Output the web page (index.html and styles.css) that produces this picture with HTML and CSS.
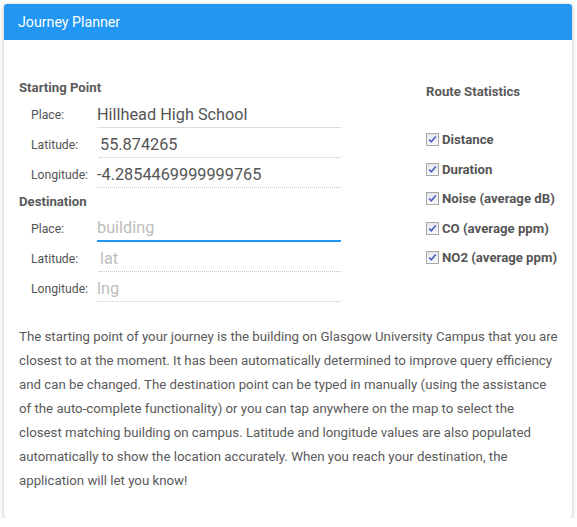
FILE: index.html
```html
<!DOCTYPE html>
<html>
<head>
<meta charset="utf-8">
<link rel="stylesheet" href="styles.css">
</head>
<body>
<div class="card">
  <div class="card-header">Journey Planner</div>
  <div class="card-body">
    <div class="top">
      <div class="form">
        <div class="group-title first">Starting Point</div>
        <div class="row">
          <span class="label">Place:</span>
          <span class="field solid">Hillhead High School</span>
        </div>
        <div class="row">
          <span class="label">Latitude:</span>
          <span class="field dotted shift">55.874265</span>
        </div>
        <div class="row">
          <span class="label">Longitude:</span>
          <span class="field dotted">-4.2854469999999765</span>
        </div>
        <div class="group-title">Destination</div>
        <div class="row">
          <span class="label">Place:</span>
          <span class="field focus placeholder">building</span>
        </div>
        <div class="row">
          <span class="label">Latitude:</span>
          <span class="field dotted shift placeholder">lat</span>
        </div>
        <div class="row">
          <span class="label">Longitude:</span>
          <span class="field dotted placeholder">lng</span>
        </div>
      </div>
      <div class="stats">
        <div class="stats-title">Route Statistics</div>
        <ul class="checks">
          <li><span class="cb"><svg viewBox="0 0 13 13" width="13" height="13"><path d="M3.2 6.6 L5.3 8.8 L9.8 3.4" fill="none" stroke="#4a5fbf" stroke-width="1.6"/></svg></span>Distance</li>
          <li><span class="cb"><svg viewBox="0 0 13 13" width="13" height="13"><path d="M3.2 6.6 L5.3 8.8 L9.8 3.4" fill="none" stroke="#4a5fbf" stroke-width="1.6"/></svg></span>Duration</li>
          <li><span class="cb"><svg viewBox="0 0 13 13" width="13" height="13"><path d="M3.2 6.6 L5.3 8.8 L9.8 3.4" fill="none" stroke="#4a5fbf" stroke-width="1.6"/></svg></span>Noise (average dB)</li>
          <li><span class="cb"><svg viewBox="0 0 13 13" width="13" height="13"><path d="M3.2 6.6 L5.3 8.8 L9.8 3.4" fill="none" stroke="#4a5fbf" stroke-width="1.6"/></svg></span>CO (average ppm)</li>
          <li><span class="cb"><svg viewBox="0 0 13 13" width="13" height="13"><path d="M3.2 6.6 L5.3 8.8 L9.8 3.4" fill="none" stroke="#4a5fbf" stroke-width="1.6"/></svg></span>NO2 (average ppm)</li>
        </ul>
      </div>
    </div>
    <p class="desc">The starting point of your journey is the building on Glasgow University Campus that you are<br>closest to at the moment. It has been automatically determined to improve query efficiency<br>and can be changed. The destination point can be typed in manually (using the assistance<br>of the auto-complete functionality) or you can tap anywhere on the map to select the<br>closest matching building on campus. Latitude and longitude values are also populated<br>automatically to show the location accurately. When you reach your destination, the<br>application will let you know!</p>
  </div>
</div>
</body>
</html>
```
FILE: styles.css
```css
* { box-sizing: border-box; }
html, body { margin: 0; padding: 0; background: #fff; }
body {
  font-family: Roboto, "Liberation Sans", sans-serif;
  color: #555;
  padding: 4px 5px 0 4px;
}
.card {
  width: 568px;
  height: 514px;
  background: #fff;
  border-radius: 3px;
  box-shadow: 0 1px 4px rgba(0,0,0,0.28);
  overflow: hidden;
}
.card-header {
  height: 36px;
  background: #2196f3;
  color: #fff;
  font-size: 14.2px;
  line-height: 36px;
  padding-left: 14px;
}
.card-body {
  padding: 34px 15px 0 15px;
}
.top {
  display: flex;
}
.form {
  width: 322px;
}
.group-title {
  font-size: 13.2px;
  font-weight: 700;
  line-height: 22px;
  padding-top: 3px;
  height: 24px;
  color: #5a5a5a;
}
.row {
  display: flex;
  align-items: stretch;
  height: 30px;
}
.label {
  width: 78px;
  padding-left: 12px;
  font-size: 12.2px;
  line-height: 30px;
  color: #555;
  padding-top: 2px;
}
.field {
  flex: 1;
  font-size: 16.3px;
  line-height: 29px;
  padding-top: 2px;
  color: #555;
  border-bottom: 1px solid transparent;
}
.field.solid { border-bottom: 1px solid #ddd; }
.field.dotted { border-bottom: 1px dotted #c8c8c8; }
.field.focus { border-bottom: 2px solid #2196f3; line-height: 28px; padding-top: 2px; }
.field.shift { margin-left: 2px; padding-left: 1px; }
.field.placeholder { color: #bdbdbd; }
.stats {
  margin-left: 85px;
  padding-top: 9px;
}
.stats-title {
  font-size: 13.2px;
  font-weight: 700;
  line-height: 18px;
  color: #5a5a5a;
}
.checks {
  list-style: none;
  margin: 24px 0 0 0;
  padding: 0;
}
.checks li {
  display: flex;
  align-items: center;
  height: 29.5px;
  font-size: 13.2px;
  font-weight: 700;
  color: #555;
}
.cb {
  width: 13px;
  height: 13px;
  border: 1px solid #a8a8a8;
  background: linear-gradient(#e6e6ee, #f8f8fb);
  margin-right: 3px;
  position: relative;
  display: inline-block;
}
.cb svg { position: absolute; left: -1px; top: -1px; }
.desc {
  margin: 23px 0 0 0;
  font-size: 13.25px;
  line-height: 24px;
  color: #5a5a5a;
  white-space: nowrap;
}
```
